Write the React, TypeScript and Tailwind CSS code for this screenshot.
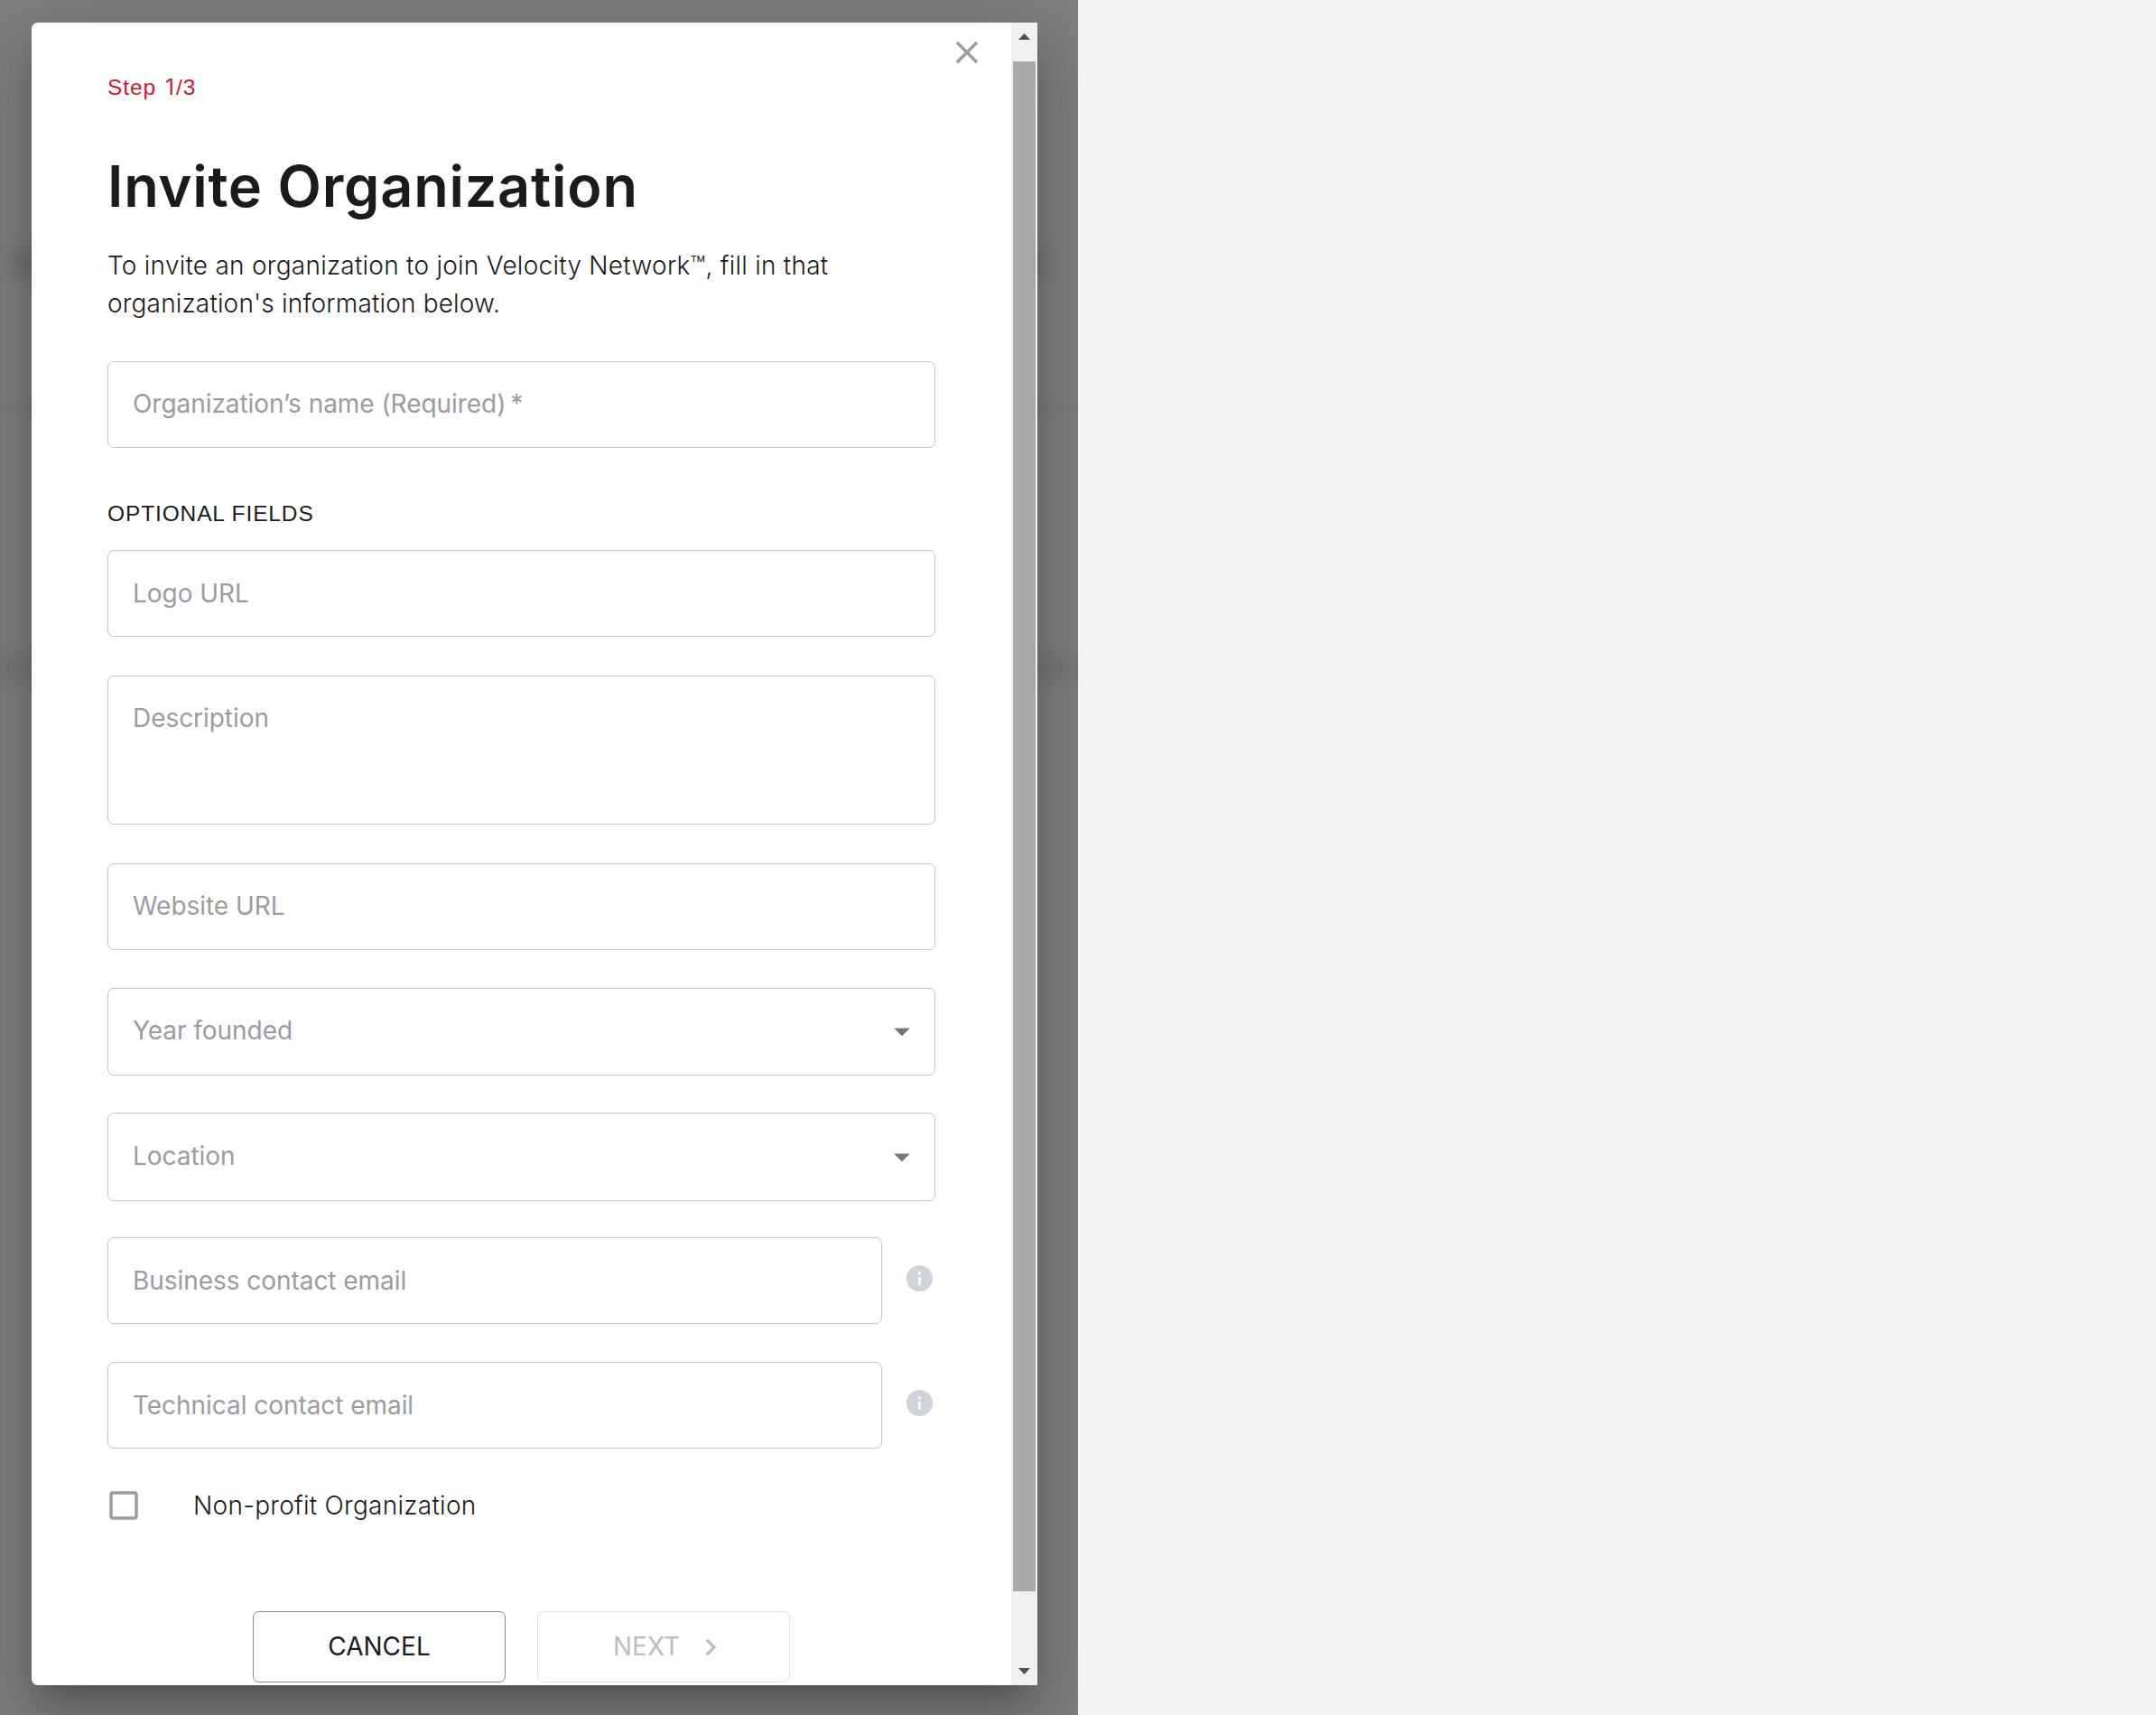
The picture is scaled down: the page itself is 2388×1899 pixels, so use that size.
import React from "react";

type IconProps = { d: string; className: string };

function Icon({ d, className }: IconProps) {
  return (
    <svg viewBox="0 0 24 24" fill="currentColor" className={`block shrink-0 ${className}`}>
      <path d={d} />
    </svg>
  );
}

const CLOSE = "M19 6.41 17.59 5 12 10.59 6.41 5 5 6.41 10.59 12 5 17.59 6.41 19 12 13.41 17.59 19 19 17.59 13.41 12z";
const DROP = "M7 10l5 5 5-5z";
const INFO = "M12 2C6.48 2 2 6.48 2 12s4.48 10 10 10 10-4.48 10-10S17.52 2 12 2zm1 15h-2v-6h2v6zm0-8h-2V7h2v2z";
const BOX = "M19 5v14H5V5h14m0-2H5c-1.1 0-2 .9-2 2v14c0 1.1.9 2 2 2h14c1.1 0 2-.9 2-2V5c0-1.1-.9-2-2-2z";
const CHEVRON = "M10 6 8.59 7.41 13.17 12l-4.58 4.59L10 18l6-6z";

function Field({ label, className = "h-24 pt-[26px]" }: { label: React.ReactNode; className?: string }) {
  return (
    <div className={`flex w-full rounded-[7px] border border-[#c4c4c4] px-[27px] ${className}`}>
      <span className="text-[28px] leading-[42px] tracking-[-0.05px] whitespace-nowrap text-[#9b9ba1]">{label}</span>
    </div>
  );
}

function Select({ label, className, iconClass }: { label: string; className: string; iconClass: string }) {
  return (
    <div className={`flex w-full justify-between rounded-[7px] border border-[#c4c4c4] pr-[15px] pl-[27px] ${className}`}>
      <span className="text-[28px] leading-[42px] tracking-[-0.05px] whitespace-nowrap text-[#9b9ba1]">{label}</span>
      <Icon d={DROP} className={`size-[42px] text-[#757575] ${iconClass}`} />
    </div>
  );
}

function EmailField({ label }: { label: string }) {
  return (
    <div className="flex w-full justify-between">
      <div className="w-[858px]">
        <Field label={label} />
      </div>
      <Icon d={INFO} className="mt-7 size-[35px] text-[#d0d4da]" />
    </div>
  );
}

function Scrollbar() {
  return (
    <div className="flex w-[29px] shrink-0 flex-col items-center bg-[#f1f1f1]">
      <svg viewBox="0 0 13 7" className="mt-3 block h-[7px] w-[13px] shrink-0 fill-[#505050]">
        <path d="M6.500 0 13 7H0z" />
      </svg>
      <div className="mt-6 h-[1694px] w-[25px] bg-[#a8a8a8]" />
      <svg viewBox="0 0 13 7" className="mt-[85px] block h-[7px] w-[13px] shrink-0 fill-[#505050]">
        <path d="M0 0h13L6.500 7z" />
      </svg>
    </div>
  );
}

export default function App() {
  return (
    <div className="h-[1899px] w-[2388px] overflow-hidden bg-[#f3f3f3] font-['Inter',sans-serif] text-[#1b1b1b]">
      <div className="relative h-full w-[1194px] overflow-hidden bg-[#808080] pt-[25px] pl-[35px]">
        <div className="absolute top-[279px] left-[16px] h-6 w-[1136px] bg-black/15 blur-[10px]" />
        <div className="absolute top-[445px] left-0 h-[14px] w-full bg-black/1" />
        <div className="absolute -left-10 top-[728px] h-6 w-[1280px] bg-black/6 blur-[9px]" />

        <div className="relative flex h-[1841px] w-[1114px] rounded-l-[7px] bg-white shadow-[0_19.25px_26.25px_-12.25px_rgba(0,0,0,0.2),0_42px_66.5px_5.25px_rgba(0,0,0,0.14),0_15.75px_80.5px_14px_rgba(0,0,0,0.12)]">
          <div className="flex w-[1085px] flex-col pl-[84px]">
            <div className="flex h-[54px] justify-end pt-3 pr-7">
              <Icon d={CLOSE} className="size-[42px] text-[#9e9e9e]" />
            </div>

            <div className="flex w-[917px] flex-col">
              <p className="h-[35px] font-['Liberation_Sans',Arial,sans-serif] text-[24.5px] leading-[35px] tracking-[0.95px] text-[#ca192c]">
                Step <span className="pr-px pl-[2px] font-['Inter',sans-serif] font-normal">1</span>/3
              </p>
              <h1 className="mt-[54px] h-[76px] text-[63px] leading-[76px] font-semibold tracking-[0.76px] whitespace-nowrap">
                Invite Organization
              </h1>
              <p className="mt-[29px] text-[28px] leading-[42px] font-light">
                <span className="tracking-[0.25px]">To invite an organization to join Velocity Network™, fill in that</span>
                <br />
                <span className="tracking-[0.17px]">organization's information below.</span>
              </p>

              <div className="mt-[43px]">
                <Field label={<>Organization’s name (Required)&thinsp;*</>} className="h-24 pt-[25px]" />
              </div>

              <p className="mt-[55px] mb-[23px] h-[35px] font-['Liberation_Sans',Arial,sans-serif] text-[24.5px] leading-[35px] tracking-[0.87px]">
                OPTIONAL FIELDS
              </p>

              <Field label="Logo URL" />
              <div className="mt-[43px]">
                <Field label="Description" className="h-[165px] pt-[25px]" />
              </div>
              <div className="mt-[43px]">
                <Field label="Website URL" className="h-24 pt-[25px]" />
              </div>
              <div className="mt-[42px]">
                <Select label="Year founded" className="h-[97px] pt-[25px]" iconClass="mt-px" />
              </div>
              <div className="mt-[41px]">
                <Select label="Location" className="h-[98px] pt-[26px]" iconClass="mt-px" />
              </div>
              <div className="mt-10">
                <EmailField label="Business contact email" />
              </div>
              <div className="mt-[42px]">
                <EmailField label="Technical contact email" />
              </div>

              <div className="mt-[42px] -ml-[3px] flex h-[42px] items-center gap-14">
                <Icon d={BOX} className="size-[42px] text-[#9b9ba1]" />
                <span className="text-[28px] leading-[42px] font-light tracking-[0.28px]">Non-profit Organization</span>
              </div>

              <div className="mt-24 flex justify-center gap-[35px]">
                <button className="h-[79px] w-[280px] rounded-[7px] border border-[#8d8d8d] text-[28px] leading-[49px]">CANCEL</button>
                <button className="flex h-[79px] w-[280px] items-center rounded-[7px] border border-[#e0e0e0] pl-[83px] text-[28px] leading-[49px] text-[#bdbdbd]">
                  NEXT
                  <Icon d={CHEVRON} className="ml-[15px] size-[38px]" />
                </button>
              </div>
            </div>
          </div>
          <Scrollbar />
        </div>
      </div>
    </div>
  );
}
